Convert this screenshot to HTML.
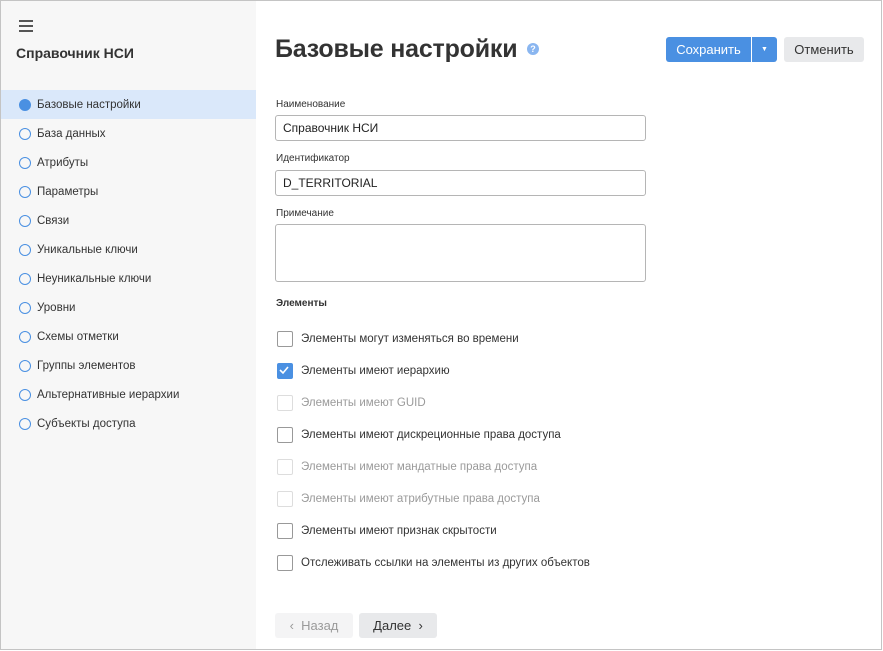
<!DOCTYPE html>
<html><head><meta charset="utf-8"><style>
*{box-sizing:border-box;margin:0;padding:0}
html,body{width:883px;height:651px;overflow:hidden;background:#fff;font-family:"Liberation Sans",sans-serif;color:#333}
.frame{position:absolute;left:0;top:0;width:882px;height:650px;border:1px solid #c4c4c4}
.side{position:absolute;left:1px;top:1px;width:255px;height:648px;background:#f7f7f7}
.burger{position:absolute;left:18px;top:19px;width:14px}
.burger i{display:block;height:2px;background:#555;margin-bottom:3px}
.stitle{position:absolute;left:15px;top:44px;font-size:14px;font-weight:bold;color:#333}
.nav{position:absolute;top:89px;left:0;width:255px}
.nav div{height:29px;line-height:31px;font-size:11.5px;padding-left:36px;position:relative;color:#333}
.nav div:before{content:"";position:absolute;left:18px;top:9px;width:10px;height:10px;border:1.3px solid #4a90e2;border-radius:50%}
.nav div.act{background:#dae8fa}
.nav div.act:before{background:#4a90e2}
h1{position:absolute;left:275px;top:35px;font-size:25px;font-weight:bold;color:#333;letter-spacing:-0.2px}
.help{position:absolute;left:527px;top:43px;width:12px;height:12px;border-radius:50%;background:#8ab6f0;color:#fff;font-size:9px;font-weight:bold;text-align:center;line-height:12px}
.btn{position:absolute;height:25px;line-height:25px;font-size:13px;border-radius:3px;text-align:center}
.save{left:666px;top:37px;width:85px;background:#4a90e2;color:#fff;border-radius:3px 0 0 3px}
.dd{left:752px;top:37px;width:25px;background:#4a90e2;color:#fff;border-radius:0 3px 3px 0;font-size:7px}
.cancel{left:784px;top:37px;width:80px;background:#e8e9eb;color:#333}
.lbl{position:absolute;left:276px;font-size:10px;color:#333}
.inp{position:absolute;left:275px;width:371px;height:26px;border:1px solid #b5b5b5;border-radius:3px;font-size:12px;padding-left:7px;line-height:24px;color:#222}
.sec{position:absolute;left:276px;top:298px;font-size:10px;font-weight:bold}
.cb{position:absolute;left:277px;font-size:11.5px;height:16px;line-height:17px;padding-left:24px;color:#333}
.cb:before{content:"";position:absolute;left:0;top:0;width:14px;height:14px;border:1.3px solid #999;border-radius:2px;background:#fff}
.cb.dis{color:#9a9a9a}
.cb.dis:before{border-color:#ddd}
.cb.on:before{background:#4a90e2;border-color:#4a90e2}
.cb.on svg{position:absolute;left:2px;top:2px}
.back{left:275px;top:613px;width:78px;background:#f4f4f5;color:#9a9a9a}
.next{left:359px;top:613px;width:78px;background:#e8e9eb;color:#333}
</style></head><body>
<div class="frame"></div>
<div class="side">
<div class="burger"><i></i><i></i><i></i></div>
<div class="stitle">Справочник НСИ</div>
<div class="nav">
<div class="act">Базовые настройки</div><div>База данных</div><div>Атрибуты</div><div>Параметры</div><div>Связи</div><div>Уникальные ключи</div><div>Неуникальные ключи</div><div>Уровни</div><div>Схемы отметки</div><div>Группы элементов</div><div>Альтернативные иерархии</div><div>Субъекты доступа</div>
</div></div>
<h1>Базовые настройки</h1>
<div class="help">?</div>
<div class="btn save">Сохранить</div><div class="btn dd">▼</div><div class="btn cancel">Отменить</div>
<div class="lbl" style="top:99px">Наименование</div>
<div class="inp" style="top:115px">Справочник НСИ</div>
<div class="lbl" style="top:153px">Идентификатор</div>
<div class="inp" style="top:170px">D_TERRITORIAL</div>
<div class="lbl" style="top:208px">Примечание</div>
<div class="inp" style="top:224px;height:58px"></div>
<div class="sec">Элементы</div>
<div class="cb" style="top:331px">Элементы могут изменяться во времени</div>
<div class="cb on" style="top:363px"><svg width="10" height="10" viewBox="0 0 10 10"><path d="M1 5l3 3 5-6" stroke="#fff" stroke-width="1.6" fill="none"/></svg>Элементы имеют иерархию</div>
<div class="cb dis" style="top:395px">Элементы имеют GUID</div>
<div class="cb" style="top:427px">Элементы имеют дискреционные права доступа</div>
<div class="cb dis" style="top:459px">Элементы имеют мандатные права доступа</div>
<div class="cb dis" style="top:491px">Элементы имеют атрибутные права доступа</div>
<div class="cb" style="top:523px">Элементы имеют признак скрытости</div>
<div class="cb" style="top:555px">Отслеживать ссылки на элементы из других объектов</div>
<div class="btn back">&#8249;&nbsp; Назад</div>
<div class="btn next">Далее &nbsp;&#8250;</div>
</body></html>
